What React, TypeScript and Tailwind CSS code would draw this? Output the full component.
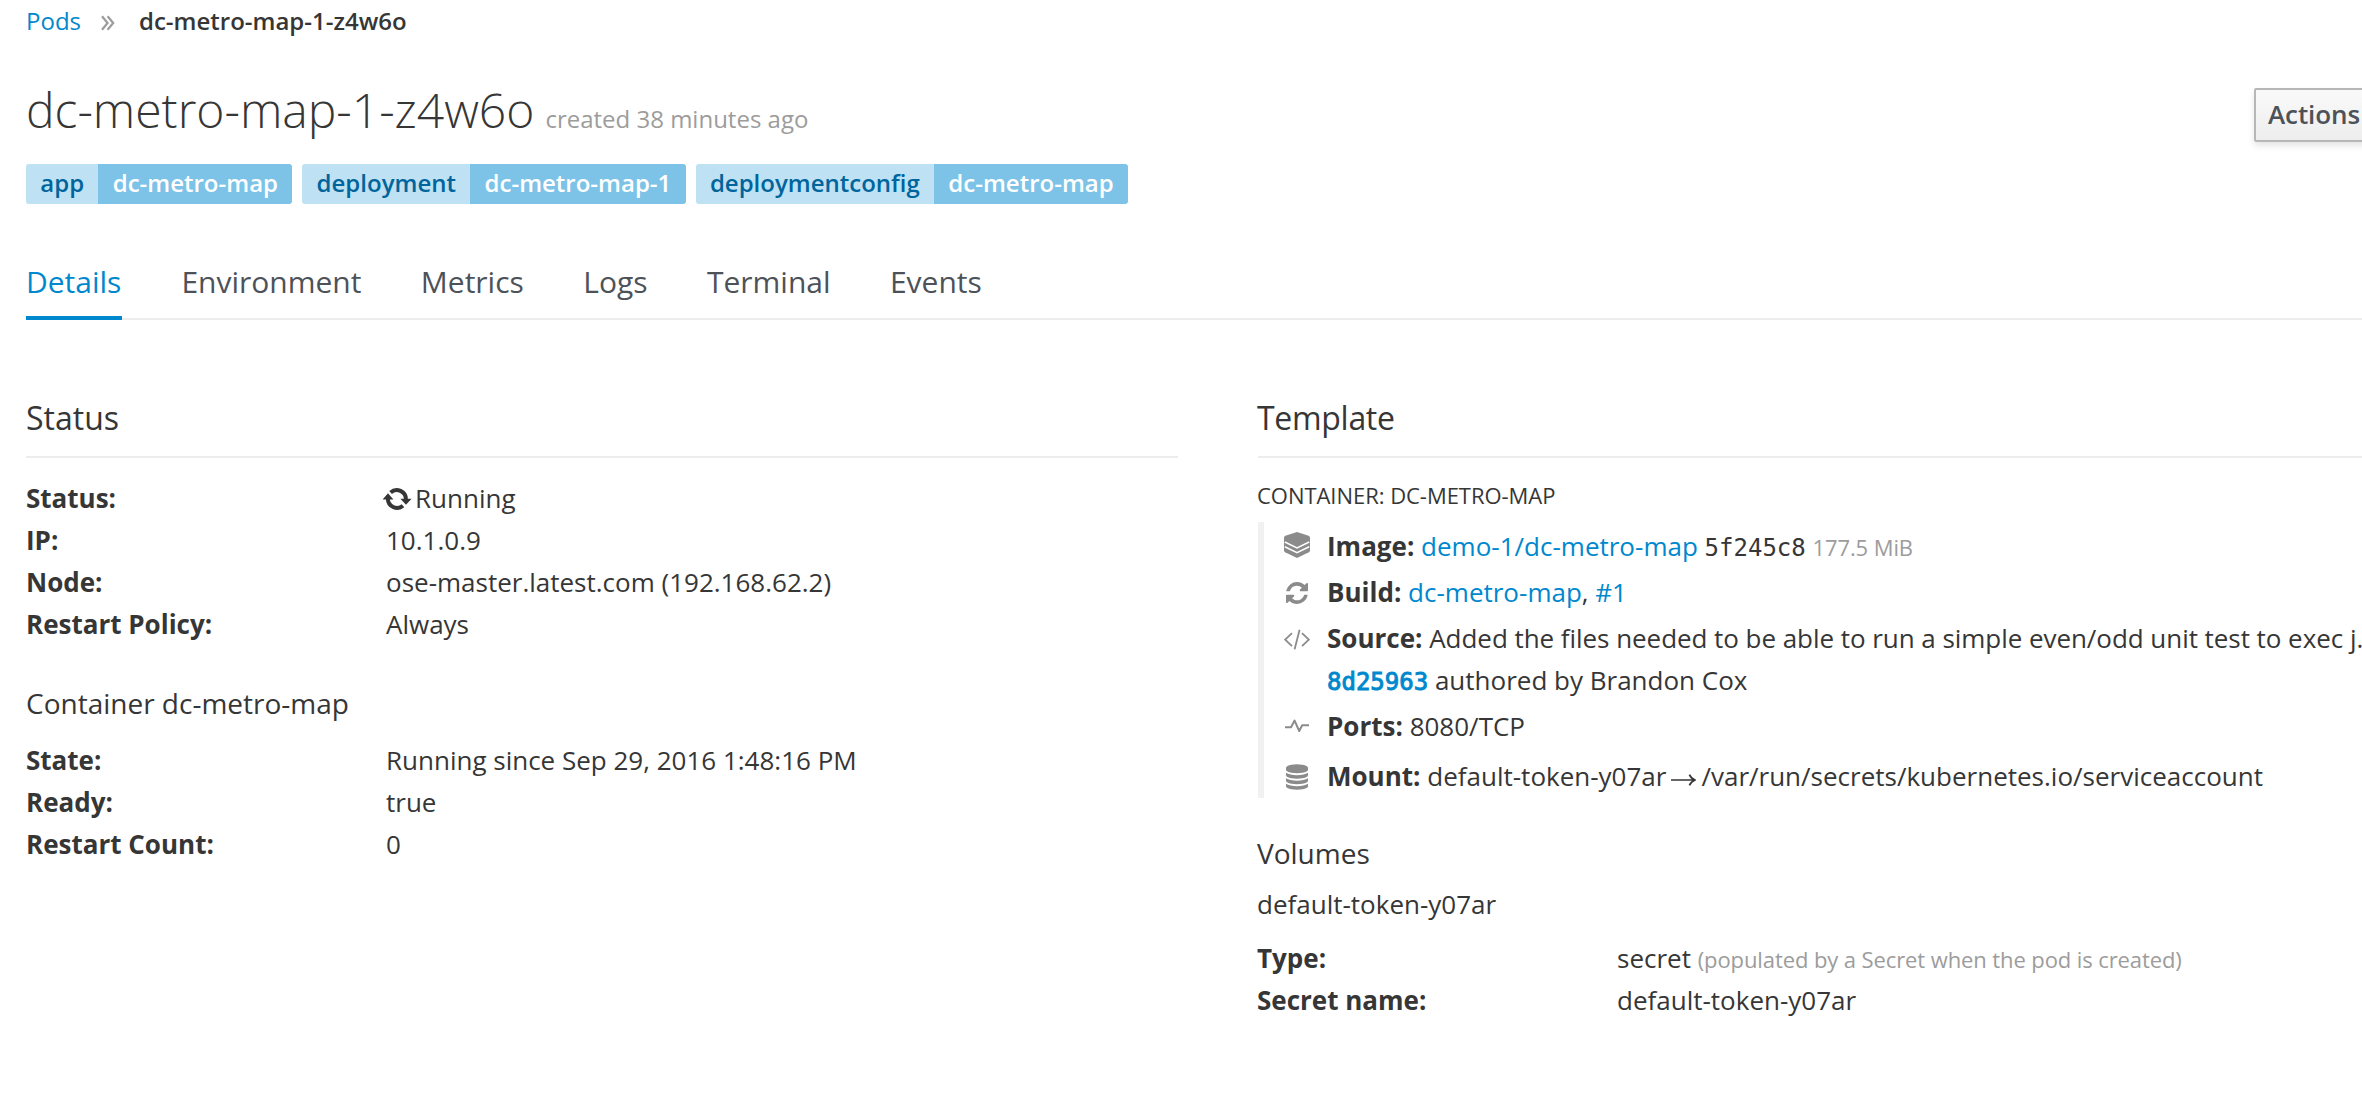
import React from 'react';

const LINK = 'text-[#0088ce]';

function Chevrons() {
  return (
    <svg className="ml-[19px] mr-[23px] mt-[3px]" width="16" height="16" viewBox="0 0 16 16" fill="none" stroke="#9c9c9c" strokeWidth="2.2">
      <path d="M2 1.2 7.6 8 2 14.8M7.6 1.2 13.2 8 7.6 14.8" />
    </svg>
  );
}

function RunningIcon() {
  return (
    <svg className="-ml-1 mr-[3px] mt-[10px] shrink-0" width="30" height="24" viewBox="0 0 30 24">
      <path d="M8.6 5.4A9.2 9.2 0 0 1 23.9 12.4M21 18.8A9.2 9.2 0 0 1 5.9 11.6" fill="none" stroke="#363636" strokeWidth="4" />
      <path d="M6 6.3 11.4 12.4H.6ZM24 17.8 29.6 11.8H18.4Z" fill="#363636" />
    </svg>
  );
}

function LayersIcon() {
  return (
    <svg className="mt-[7px]" width="26" height="26" viewBox="0 0 26 26">
      <path d="M13 0 24.6 3.8Q26 4.3 26 5.6V18.4Q26 19.6 24.8 20.2L13 26 1.2 20.2Q0 19.6 0 18.4V5.6Q0 4.3 1.4 3.8Z" fill="#8b8b8b" />
      <path d="M.8 10 13 15.9 25.2 10M.8 14.8 13 20.7 25.2 14.8" fill="none" stroke="#fff" strokeWidth="1.5" />
    </svg>
  );
}

function RefreshIcon() {
  return (
    <svg className="ml-[2px] mt-[11px]" width="22" height="22" viewBox="0 0 1536 1536" fill="#8b8b8b">
      <path d="M1511 928q0 5-1 7-64 268-268 434.5t-478 166.5q-146 0-282.5-55t-243.5-157l-129 129q-19 19-45 19t-45-19-19-45v-448q0-26 19-45t45-19h448q26 0 45 19t19 45-19 45l-137 137q71 66 161 102t187 36q134 0 250-65t186-179q11-17 53-117 8-23 30-23h192q13 0 22.5 9.5t9.5 22.5zm25-800v448q0 26-19 45t-45 19h-448q-26 0-45-19t-19-45 19-45l138-138q-148-137-349-137-134 0-250 65t-186 179q-11 17-53 117-8 23-30 23h-199q-13 0-22.5-9.5t-9.5-22.5v-7q65-268 270-434.5t480-166.5q146 0 284 55.5t245 156.5l130-129q19-19 45-19t45 19 19 45z" />
    </svg>
  );
}

function CodeIcon() {
  return (
    <svg className="mt-[12px]" width="26" height="21" viewBox="0 0 26 21" fill="none" stroke="#8b8b8b" strokeWidth="1.8">
      <path d="M8 4.2 1.2 10.7 8 17.2M18 4.2 24.8 10.7 18 17.2M15.6.8 10.6 20.2" />
    </svg>
  );
}

function PulseIcon() {
  return (
    <svg className="ml-[1px] mt-[14px]" width="24" height="14" viewBox="0 0 24 14" fill="none" stroke="#8b8b8b" strokeWidth="2" strokeLinejoin="round">
      <path d="M0 8.2H6L9.6 1.6 14.2 12 17.2 6.2H24" />
    </svg>
  );
}

function DatabaseIcon() {
  return (
    <svg className="ml-[2px] mt-[9px]" width="22" height="26" viewBox="0 0 1536 1792" fill="#8b8b8b">
      <path d="M768 768q237 0 443-43t325-127v170q0 69-103 128t-280 93.5-385 34.5-385-34.5-280-93.5-103-128v-170q119 84 325 127t443 43zm0 768q237 0 443-43t325-127v170q0 69-103 128t-280 93.5-385 34.5-385-34.5-280-93.5-103-128v-170q119 84 325 127t443 43zm0-384q237 0 443-43t325-127v170q0 69-103 128t-280 93.5-385 34.5-385-34.5-280-93.5-103-128v-170q119 84 325 127t443 43zm0-1152q208 0 385 34.5t280 93.5 103 128v128q0 69-103 128t-280 93.5-385 34.5-385-34.5-280-93.5-103-128v-128q0-69 103-128t280-93.5 385-34.5z" />
    </svg>
  );
}

function ArrowIcon() {
  return (
    <svg className="ml-[5px] mr-[5px] inline-block align-[-1px]" width="25" height="14" viewBox="0 0 25 14" fill="none" stroke="#363636" strokeWidth="1.7">
      <path d="M0 7H23.5M18.4 1.6Q20.2 5.6 24 7 20.2 8.4 18.4 12.4" />
    </svg>
  );
}

function Label({ name, value }: { name: string; value: string }) {
  return (
    <div className="flex h-10 overflow-hidden rounded-[3px] text-[24px] font-semibold leading-[38px]">
      <span className="bg-[#bee1f4] px-[14.3px] text-[#00659c]">{name}</span>
      <span className="bg-[#7dc3e8] px-[14.3px] text-white">{value}</span>
    </div>
  );
}

function Row({ name, children }: { name: string; children: React.ReactNode }) {
  return (
    <div className="flex h-[42px]">
      <dt className="w-[360px] shrink-0 font-bold">{name}:</dt>
      <dd className="flex">{children}</dd>
    </div>
  );
}

function Item({ icon, name, children }: { icon: React.ReactNode; name: string; children: React.ReactNode }) {
  return (
    <div className="flex">
      <div className="w-[43px] shrink-0">{icon}</div>
      <div>
        <b>{name}:</b> {children}
      </div>
    </div>
  );
}

const TABS = ['Environment', 'Metrics', 'Logs', 'Terminal', 'Events'];

export default function App() {
  return (
    <div className="h-[1104px] w-full overflow-hidden whitespace-nowrap bg-white pl-[26px] font-['Open_Sans',sans-serif] text-[26px] leading-[42px] text-[#363636]">
      <nav className="flex h-[42px] items-center text-[24px]">
        <a className={LINK}>Pods</a>
        <Chevrons />
        <span className="font-semibold">dc-metro-map-1-z4w6o</span>
      </nav>

      <header className="mt-[42px] flex h-[52px] justify-between">
        <h1 className="text-[48px] font-light leading-[52px]">
          dc-metro-map-1-z4w6o
          <small className="ml-[11px] text-[24px] font-normal text-[#9c9c9c]">created 38 minutes ago</small>
        </h1>
        <button className="-mr-[40px] mt-[4px] h-[54px] w-[148px] rounded-[2px] border-2 border-[#b7b7b7] bg-linear-to-b from-[#fafafa] to-[#ededed] pl-[12px] text-left text-[26px] font-semibold leading-[48px] tracking-[-0.1px] text-[#4d5258] shadow-[0_4px_6px_rgba(3,3,3,0.1)]">
          <span className="block pb-0.5 leading-[48px]">Actions</span>
        </button>
      </header>

      <div className="mt-[28px] flex gap-[10px]">
        <Label name="app" value="dc-metro-map" />
        <Label name="deployment" value="dc-metro-map-1" />
        <Label name="deploymentconfig" value="dc-metro-map" />
      </div>

      <div className="mt-[57px] flex h-[59px] gap-[59.4px] text-[30px] text-[#4d5258] shadow-[inset_0_-2px_0_#ededed]">
        <a className="w-[96px] border-b-4 border-[#0088ce] text-[#0088ce]">Details</a>
        {TABS.map((t) => (
          <a key={t}>{t}</a>
        ))}
      </div>

      <main className="mt-[80px] flex gap-[80px]">
        <section className="w-[1152px] shrink-0">
          <h2 className="border-b-2 border-[#ededed] pb-[20px] text-[32px] leading-[36px]">Status</h2>
          <dl className="mt-[19px]">
            <Row name="Status"><RunningIcon />Running</Row>
            <Row name="IP">10.1.0.9</Row>
            <Row name="Node">ose-master.latest.com (192.168.62.2)</Row>
            <Row name="Restart Policy">Always</Row>
          </dl>
          <h3 className="mt-[42px] text-[28px] leading-[32px]">Container dc-metro-map</h3>
          <dl className="mt-[20px]">
            <Row name="State">Running since Sep 29, 2016 1:48:16 PM</Row>
            <Row name="Ready">true</Row>
            <Row name="Restart Count">0</Row>
          </dl>
        </section>

        <section className="min-w-0 flex-1">
          <h2 className="border-b-2 border-[#ededed] pb-[20px] text-[32px] leading-[36px] tracking-[-0.3px]"><span className="-ml-px">Template</span></h2>
          <h4 className="-ml-px mt-[25px] text-[22px] leading-[24px] tracking-[-0.04px]">CONTAINER: DC-METRO-MAP</h4>
          <div className="mt-[15px] flex h-[276px] flex-col gap-1 border-l-[6px] border-[#f1f1f1] pl-[20px] pt-[3px]">
            <Item icon={<LayersIcon />} name="Image">
              <a className={LINK}>demo-1/dc-metro-map</a>{' '}
              <span className="font-['DejaVu_Sans_Mono',monospace] text-[24px] leading-none">5f245c8</span>{' '}
              <span className="text-[22px] leading-none tracking-[-0.1px] text-[#9c9c9c]">177.5 MiB</span>
            </Item>
            <Item icon={<RefreshIcon />} name="Build">
              <a className={LINK}>dc-metro-map</a>, <a className={LINK}>#1</a>
            </Item>
            <Item icon={<CodeIcon />} name="Source">
              <span className="tracking-[-0.05px]">Added the files needed to be able to run a simple even/odd unit test to exec j.</span>
              <br />
              <a className="font-['DejaVu_Sans_Mono',monospace] text-[24px] leading-none text-[#0088ce] [-webkit-text-stroke:0.9px_#0088ce]">8d25963</a> authored by Brandon Cox
            </Item>
            <Item icon={<PulseIcon />} name="Ports">8080/TCP</Item>
            <div className="mt-1">
              <Item icon={<DatabaseIcon />} name="Mount">
                default-token-y07ar<ArrowIcon />/var/run/secrets/kubernetes.io/serviceaccount
              </Item>
            </div>
          </div>
          <div className="-ml-px">
            <h3 className="mt-[39px] text-[28px] leading-[32px]">Volumes</h3>
            <h4 className="mt-[14px]">default-token-y07ar</h4>
            <dl className="mt-[12px]">
              <Row name="Type">
                <span>
                  secret <small className="text-[22px] leading-none tracking-[-0.1px] text-[#9c9c9c]">(populated by a Secret when the pod is created)</small>
                </span>
              </Row>
              <Row name="Secret name">default-token-y07ar</Row>
            </dl>
          </div>
        </section>
      </main>
    </div>
  );
}
